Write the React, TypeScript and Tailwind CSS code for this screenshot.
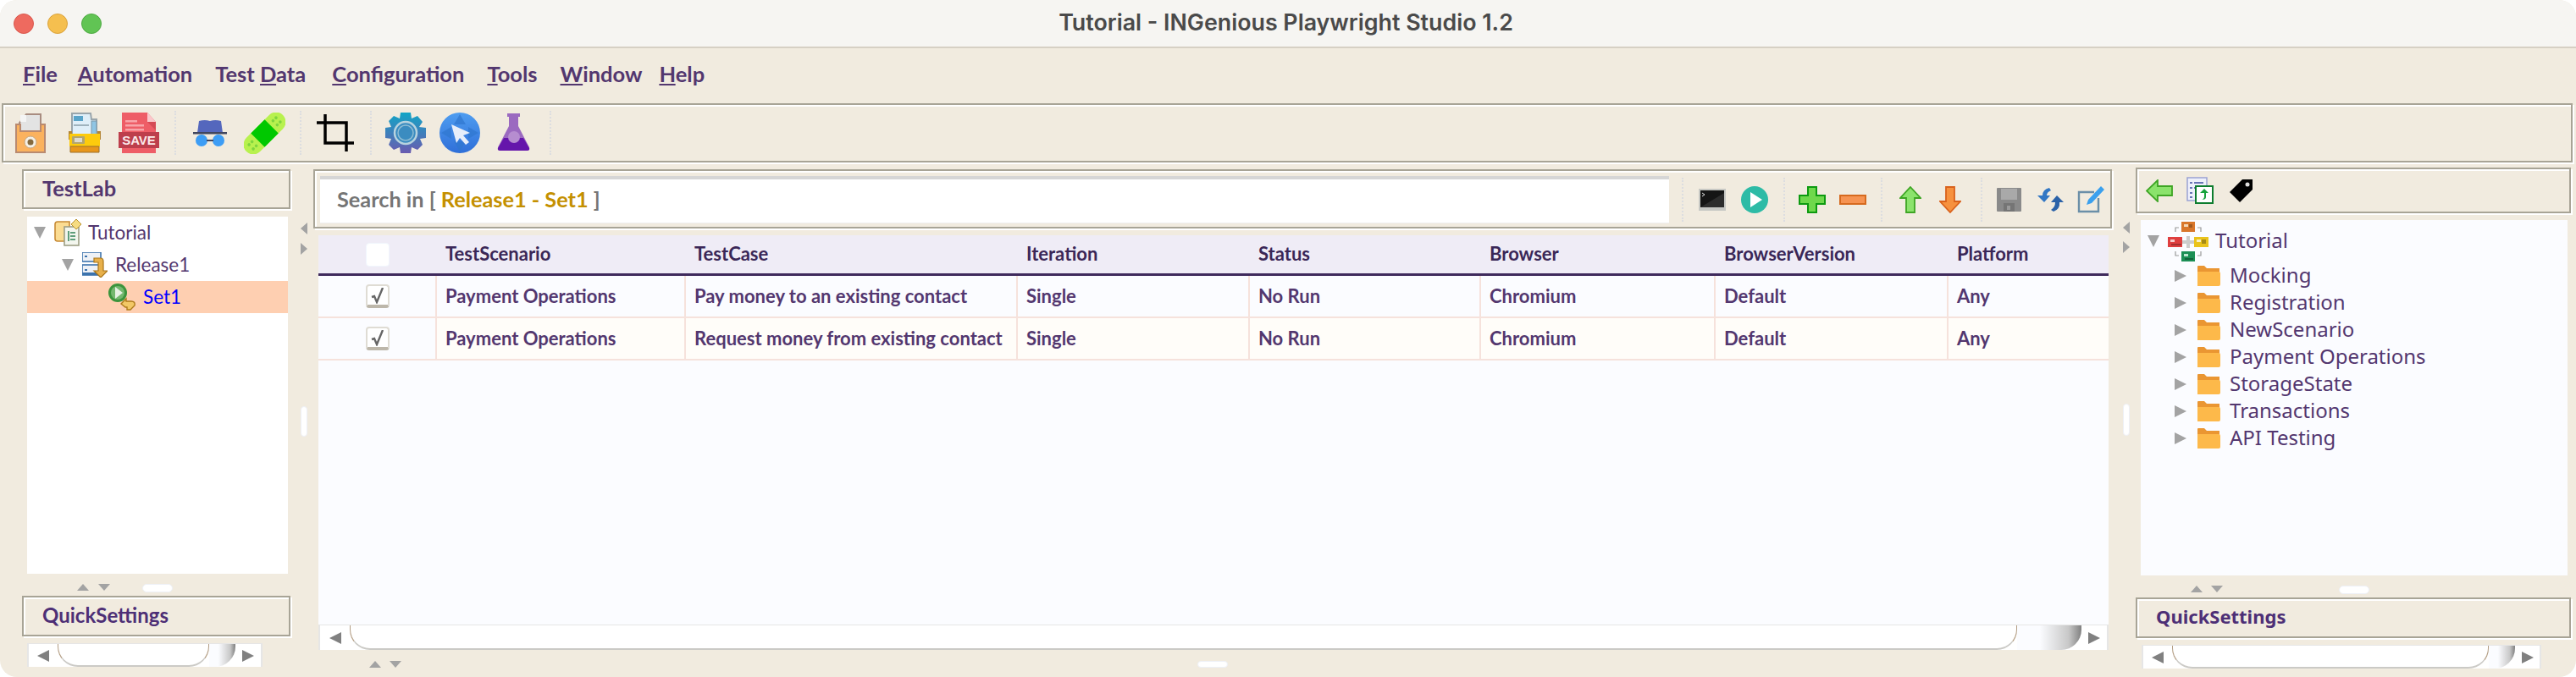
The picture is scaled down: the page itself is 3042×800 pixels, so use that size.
import React from 'react';

const Tri = ({ dir, w = 14, h = 14, color = '#a3a3a3' }: { dir: 'l' | 'r' | 'u' | 'd'; w?: number; h?: number; color?: string }) => {
  const pts = { l: '14,0 14,14 0,7', r: '0,0 14,7 0,14', u: '0,14 14,14 7,0', d: '0,0 14,0 7,14' }[dir];
  return (
    <svg width={w} height={h} viewBox="0 0 14 14" preserveAspectRatio="none" className="shrink-0 block">
      <polygon points={pts} fill={color} />
    </svg>
  );
};

const Sep = ({ cls }: { cls: string }) => (
  <div className={`w-[2px] h-[52px] shrink-0 border-l-2 border-dotted border-[#dcdde0] ${cls}`} />
);

const OpenIcon = () => (
  <svg width="36" height="48" viewBox="0 0 36 48" className="shrink-0">
    <path d="M5 12 L13 2 H30 V26 H5Z" fill="#e3e3e3" stroke="#a88c80" strokeWidth="2" />
    <path d="M6 3 L13 3 V11 H6Z" fill="#f4f4f4" />
    <path d="M1 14 H6 V22 H30 V14 H35 V47 H1Z" fill="#fbb25e" stroke="#b98a70" strokeWidth="2" />
    <circle cx="18" cy="35" r="7" fill="#f5f0e6" stroke="#c7a77f" />
    <circle cx="18" cy="35" r="3.5" fill="#856a3e" />
  </svg>
);
const ArchiveIcon = () => (
  <svg width="40" height="48" viewBox="0 0 40 48" className="shrink-0">
    <path d="M5 1 H27 L28 8 H34 V28 H5Z" fill="#dfeef8" stroke="#9aa5ab" strokeWidth="2" />
    <rect x="7" y="4" width="11" height="6" fill="#5aa4c9" />
    <rect x="7" y="14" width="18" height="2" fill="#9fb2bd" />
    <rect x="28" y="10" width="6" height="18" fill="#8fc5e4" stroke="#7c95a5" />
    <path d="M1 22 H5 V26 H35 V22 H39 V32 H1Z" fill="#b38535" />
    <path d="M2 25 H38 V40 H2Z" fill="#fdcb0c" />
    <path d="M3 40 H37 V47 H3Z" fill="#e8961b" stroke="#9b6f2a" />
    <rect x="5" y="28" width="15" height="9" rx="1" fill="#b3a56d" />
    <rect x="8" y="30" width="9" height="5" fill="#dedbd0" />
  </svg>
);
const SaveIcon = () => (
  <svg width="48" height="48" viewBox="0 0 48 48" className="shrink-0">
    <path d="M4 0 H34 L44 11 V48 H4Z" fill="#ee5d67" />
    <path d="M34 0 L44 11 H34Z" fill="#fbc7cb" />
    <path d="M34 11 H44 V21Z" fill="#d54a55" />
    <rect x="8" y="9" width="14" height="2.5" fill="#f8a5aa" />
    <rect x="8" y="14" width="22" height="2.5" fill="#f8a5aa" />
    <rect x="8" y="19" width="22" height="2.5" fill="#f8a5aa" />
    <rect x="0" y="23" width="48" height="19" fill="#bd3e4c" />
    <text x="24" y="38" textAnchor="middle" fontSize="15" fontWeight="700" fill="#fbe9ea" fontFamily="'Liberation Sans',sans-serif">SAVE</text>
  </svg>
);
const HatIcon = () => (
  <svg width="40" height="32" viewBox="0 0 40 32" className="shrink-0">
    <path d="M7 2 Q14 0 20 2 Q26 0 33 2 L35 16 H5Z" fill="#5467bd" />
    <rect x="0" y="15" width="40" height="2.5" fill="#40465f" />
    <circle cx="10" cy="25" r="7" fill="#3d9df5" />
    <circle cx="30" cy="25" r="7" fill="#3d9df5" />
    <rect x="16" y="24" width="8" height="2" fill="#40465f" />
  </svg>
);
const BandageIcon = () => (
  <svg width="49" height="49" viewBox="0 0 49 49" className="shrink-0">
    <g transform="rotate(-45 24.5 24.5)">
      <rect x="-6" y="13" width="61" height="23" rx="11.5" fill="#b8f14e" />
      <rect x="13" y="13" width="23" height="23" fill="#00c800" />
      <g fill="#7fd53e">
        <circle cx="2" cy="21" r="1.8" /><circle cx="7" cy="21" r="1.8" /><circle cx="2" cy="28" r="1.8" /><circle cx="7" cy="28" r="1.8" />
        <circle cx="42" cy="21" r="1.8" /><circle cx="47" cy="21" r="1.8" /><circle cx="42" cy="28" r="1.8" /><circle cx="47" cy="28" r="1.8" />
      </g>
    </g>
  </svg>
);
const CropIcon = () => (
  <svg width="44" height="44" viewBox="0 0 44 44" className="shrink-0">
    <path d="M0 10 H35 V34 M10 0 V34 H44 M35 34 V44" fill="none" stroke="#000" strokeWidth="3.5" />
  </svg>
);
const GearIcon = () => (
  <svg width="48" height="48" viewBox="0 0 48 48" className="shrink-0">
    <defs>
      <linearGradient id="gearg" x1="0" y1="0" x2="0" y2="1">
        <stop offset="0" stopColor="#12a5c6" />
        <stop offset="1" stopColor="#6a5bb0" />
      </linearGradient>
    </defs>
    <path
      d="M18 0 H30 L31 7 L38 4 L44 11 L40 17 L48 18 V30 L41 31 L44 38 L38 44 L31 41 L30 48 H18 L17 41 L10 44 L4 38 L7 31 L0 30 V18 L7 17 L4 10 L10 4 L17 7Z"
      fill="url(#gearg)"
    />
    <circle cx="24" cy="24" r="13" fill="#3b8cc0" stroke="#b7d3df" strokeWidth="2.5" />
    <circle cx="24" cy="24" r="9" fill="#3b8cc0" stroke="#8dbcd4" strokeWidth="1.5" />
  </svg>
);
const GlobeIcon = () => (
  <svg width="48" height="48" viewBox="0 0 48 48" className="shrink-0">
    <defs>
      <linearGradient id="globeg" x1="0" y1="0" x2="0" y2="1">
        <stop offset="0" stopColor="#4f9df0" />
        <stop offset="1" stopColor="#2f6fd8" />
      </linearGradient>
    </defs>
    <circle cx="24" cy="24" r="24" fill="url(#globeg)" />
    <path d="M24 2 L31 14 H17Z M46 24 L34 31 V17Z M24 46 L17 34 H31Z M2 24 L14 17 V31Z" fill="#2f76cf" opacity="0.7" />
    <path d="M14 14 L36 24 L28 27 L35 35 L31 38 L24 30 L20 36Z" fill="#e7eefa" />
  </svg>
);
const FlaskIcon = () => (
  <svg width="39" height="48" viewBox="0 0 39 48" className="shrink-0">
    <path d="M12 1 H27 V5 H25 V16 L38 41 Q39 45 35 45 H4 Q0 45 1 41 L14 16 V5 H12Z" fill="#9b6ac0" />
    <path d="M8 30 H31 L38 42 Q39 45 35 45 H4 Q0 45 1 42Z" fill="#6516ab" />
    <circle cx="20" cy="29" r="7" fill="#b68dd0" />
  </svg>
);

const TerminalIcon = () => (
  <svg width="32" height="26" viewBox="0 0 32 26" className="shrink-0">
    <rect x="0" y="0" width="32" height="26" fill="#c7c8c4" />
    <rect x="2" y="2" width="28" height="20" fill="#151515" />
    <path d="M2 22 L30 5 V22Z" fill="#2d2d2d" />
    <path d="M4 5 L7 7 L4 9" stroke="#ddd" fill="none" strokeWidth="1" />
  </svg>
);
const PlayIcon = () => (
  <svg width="32" height="32" viewBox="0 0 32 32" className="shrink-0">
    <circle cx="16" cy="16" r="16" fill="#2dbba6" />
    <polygon points="11,7 25,16 11,25" fill="#fff" />
  </svg>
);
const PlusIcon = () => (
  <svg width="32" height="32" viewBox="0 0 32 32" className="shrink-0">
    <path d="M11 1 H21 V11 H31 V21 H21 V31 H11 V21 H1 V11 H11Z" fill="#6fd84c" stroke="#0d9a10" strokeWidth="2" />
  </svg>
);
const MinusIcon = () => (
  <svg width="32" height="12" viewBox="0 0 32 12" className="shrink-0">
    <rect x="1" y="1" width="30" height="10" fill="#f69352" stroke="#d66a1f" strokeWidth="2" />
  </svg>
);
const UpIcon = () => (
  <svg width="26" height="32" viewBox="0 0 26 32" className="shrink-0">
    <path d="M13 1 L25 14 H18 V31 H8 V14 H1Z" fill="#8be36c" stroke="#3ea524" strokeWidth="1.8" />
  </svg>
);
const DownIcon = () => (
  <svg width="26" height="32" viewBox="0 0 26 32" className="shrink-0">
    <path d="M13 31 L25 18 H18 V1 H8 V18 H1Z" fill="#f6913f" stroke="#d9621c" strokeWidth="1.8" />
  </svg>
);
const DiskIcon = () => (
  <svg width="29" height="28" viewBox="0 0 29 28" className="shrink-0">
    <rect width="29" height="28" rx="1" fill="#8a8a8a" />
    <rect x="5" y="1" width="19" height="13" fill="#a9a9a9" />
    <rect x="8" y="18" width="13" height="10" fill="#757575" />
    <rect x="12" y="21" width="4" height="5" fill="#9a9a9a" />
  </svg>
);
const SwapIcon = () => (
  <svg width="31" height="30" viewBox="0 0 31 30" className="shrink-0">
    <path d="M14 1 Q6 3 6 10 H0 L8 18 L15 10 H11 Q11 6 16 4Z" fill="#3277c4" />
    <path d="M19 29 Q27 26 26 18 H31 L23 10 L16 18 H21 Q21 24 16 27Z" fill="#2b62a8" />
  </svg>
);
const EditIcon = () => (
  <svg width="32" height="32" viewBox="0 0 32 32" className="shrink-0">
    <path d="M20 7 H2 V30 H25 V14" fill="none" stroke="#6b8fa8" strokeWidth="2.4" />
    <path d="M28 0 L32 4 L17 20 L11 22 L13 16Z" fill="#3aa0ee" />
  </svg>
);

const BackIcon = () => (
  <svg width="32" height="27" viewBox="0 0 32 27" className="shrink-0">
    <path d="M14 1 L1 13.5 L14 26 V19 H31 V8 H14Z" fill="#8be36c" stroke="#3ea524" strokeWidth="1.8" />
  </svg>
);
const DocSyncIcon = () => (
  <svg width="32" height="32" viewBox="0 0 32 32" className="shrink-0">
    <rect x="1" y="1" width="23" height="27" fill="#eef0fb" stroke="#9aa3d4" strokeWidth="1.5" />
    <g fill="#6a76b5">
      <rect x="4" y="6" width="3" height="2" /><rect x="9" y="6" width="11" height="2" />
      <rect x="4" y="12" width="3" height="2" /><rect x="9" y="12" width="7" height="2" />
      <rect x="4" y="18" width="3" height="2" /><rect x="4" y="23" width="3" height="2" />
    </g>
    <rect x="11" y="11" width="20" height="20" fill="#fff" stroke="#0e7d2f" strokeWidth="2" />
    <path d="M21 14 L26 19 H23 V24 Q23 27 18 27 Q21 26 21 23 V19 H16Z" fill="#17a23c" />
  </svg>
);
const TagIcon = () => (
  <svg width="29" height="28" viewBox="0 0 29 28" className="shrink-0">
    <path d="M16 1 H28 V13 L13 28 L1 16Z" fill="#000" />
    <circle cx="22" cy="7" r="2.5" fill="#ddd" />
  </svg>
);

const ProjectIcon = () => (
  <svg width="32" height="32" viewBox="0 0 32 32" className="shrink-0">
    <path d="M1 6 Q1 3 4 3 H18 V26 H4 Q1 26 1 23Z" fill="#fbdc92" stroke="#c78a35" strokeWidth="1.6" />
    <rect x="12" y="9" width="17" height="22" fill="#f3f6ee" stroke="#9d9f84" strokeWidth="1.6" />
    <g fill="#5f9e7a">
      <rect x="16" y="14" width="2" height="12" /><rect x="19" y="15" width="6" height="2" />
      <rect x="19" y="19" width="6" height="2" /><rect x="19" y="23" width="6" height="2" />
    </g>
    <path d="M26 0 L32 6 L26 12 L20 6Z" fill="#f6dc82" stroke="#b9912c" />
  </svg>
);
const ReleaseIcon = () => (
  <svg width="30" height="30" viewBox="0 0 30 30" className="shrink-0">
    <rect x="0" y="0" width="22" height="11" fill="#eef1f6" stroke="#3c73ad" strokeWidth="1.6" />
    <rect x="0" y="15" width="22" height="12" fill="#eef1f6" stroke="#3c73ad" strokeWidth="1.6" />
    <rect x="3" y="4" width="3" height="2" fill="#3c73ad" /><rect x="3" y="20" width="3" height="2" fill="#3c73ad" />
    <rect x="0" y="24" width="22" height="3" fill="#3c73ad" />
    <path d="M14 7 H22 Q25 7 25 11 V22 H30 L22 30 L14 22 H19 V12 H14Z" fill="#e7b04b" stroke="#a9761a" strokeWidth="1.2" />
  </svg>
);
const SetIcon = () => (
  <svg width="32" height="32" viewBox="0 0 32 32" className="shrink-0">
    <circle cx="11" cy="11" r="11" fill="#3b943c" />
    <circle cx="11" cy="11" r="8" fill="#74b86f" />
    <polygon points="8,4 17,11 8,18" fill="#e7f1e5" />
    <path d="M15 24 L21 18 V21 H27 Q32 21 31 26 L26 31 H22 V28 H20Z" fill="#f2c867" stroke="#ae7b1b" strokeWidth="1.4" />
  </svg>
);
const RootIcon = () => (
  <svg width="48" height="47" viewBox="0 0 48 47" className="shrink-0">
    <path d="M9 12 V7 H13 M35 7 H39 V12 M9 35 V40 H13 M39 35 V40 H35" fill="none" stroke="#999" strokeWidth="1.2" />
    <rect x="22" y="17" width="4" height="14" fill="#ccc" />
    <rect x="17" y="22" width="14" height="4" fill="#ccc" />
    <rect x="16" y="0" width="16" height="12" fill="#d9772c" /><rect x="19" y="3" width="5" height="3" fill="#f3d8b8" /><rect x="25" y="3" width="4" height="4" fill="#a15a21" />
    <rect x="0" y="18" width="17" height="12" fill="#df3f3f" /><rect x="3" y="21" width="5" height="3" fill="#f6cccc" /><rect x="4" y="26" width="12" height="2" fill="#a62f2f" />
    <rect x="31" y="18" width="17" height="12" fill="#eac31b" /><rect x="34" y="21" width="5" height="3" fill="#fbf0bf" /><rect x="40" y="21" width="5" height="5" fill="#a58a16" />
    <rect x="16" y="35" width="16" height="12" fill="#1c8f55" /><rect x="19" y="38" width="5" height="3" fill="#bfe5d0" /><rect x="20" y="43" width="10" height="2" fill="#12633b" />
  </svg>
);
const FolderIcon = () => (
  <svg width="28" height="24" viewBox="0 0 28 24" className="shrink-0">
    <path d="M1 1 Q1 0 2 0 H9 L12 3 H27 V8 H1Z" fill="#ea9632" />
    <path d="M1 7 H26 Q28 7 28 9 V22 Q28 24 26 24 H1Z" fill="#fdb94a" />
  </svg>
);

const Scroller = ({ wrap, thumb, tail, leftW }: { wrap: string; thumb: string; tail: string; leftW: string }) => (
  <div className={`flex shrink-0 bg-white border-l-2 border-r-2 border-t border-[#e6e6e6] ${wrap}`}>
    <div className={`flex items-center justify-center shrink-0 ${leftW}`}><Tri dir="l" color="#808080" /></div>
    <div className={`${thumb} shrink-0 border-l border-r border-b-2 border-l-[#b39d83] border-r-[#b39d83] border-b-[#cbcac6] rounded-b-[24px] bg-white`} />
    <div className={`${tail} shrink-0 rounded-br-[24px] bg-[linear-gradient(to_right,#fbfcff_35%,#c8c8c8_80%,#808080)]`} />
    <div className="flex items-center justify-center flex-1"><Tri dir="r" color="#808080" /></div>
  </div>
);

const Handle = ({ cls }: { cls: string }) => <div className={`bg-white border border-[#eef0f6] rounded-[5px] shrink-0 ${cls}`} />;

const menu = [
  ['', 'F', 'ile', 'ml-[27px]'],
  ['', 'A', 'utomation', 'ml-[24px]'],
  ['Test ', 'D', 'ata', 'ml-[27px]'],
  ['', 'C', 'onfiguration', 'ml-[31px]'],
  ['', 'T', 'ools', 'ml-[27px]'],
  ['', 'W', 'indow', 'ml-[27px]'],
  ['', 'H', 'elp', 'ml-[20px]'],
];

const colW = ['w-[138px]', 'w-[294px]', 'w-[392px]', 'w-[274px]', 'w-[273px]', 'w-[277px]', 'w-[275px]', 'w-[191px]'];
const heads = ['TestScenario', 'TestCase', 'Iteration', 'Status', 'Browser', 'BrowserVersion', 'Platform'];
const rows = [
  ['Payment Operations', 'Pay money to an existing contact', 'Single', 'No Run', 'Chromium', 'Default', 'Any'],
  ['Payment Operations', 'Request money from existing contact', 'Single', 'No Run', 'Chromium', 'Default', 'Any'],
];
const folders = ['Mocking', 'Registration', 'NewScenario', 'Payment Operations', 'StorageState', 'Transactions', 'API Testing'];

const etched = 'border-2 border-[#a8a496] shadow-[inset_2px_2px_0_#fff,2px_2px_0_#fff]';

export default function App() {
  return (
    <div className="w-[3042px] h-[800px] bg-white overflow-hidden font-['Lato',sans-serif]">
      <div className="w-full h-full flex flex-col bg-[#f1ebdf] rounded-[20px] overflow-hidden">
        {/* title bar */}
        <div className="h-[57px] shrink-0 bg-[#f6f5f2] border-b-2 border-[#d6d0c4] flex items-center relative">
          <div className="flex gap-[16px] ml-[16px]">
            <div className="w-[24px] h-[24px] rounded-full bg-[#ee6a5f] border border-[#d9574d]" />
            <div className="w-[24px] h-[24px] rounded-full bg-[#f5bf4f] border border-[#d9a23c]" />
            <div className="w-[24px] h-[24px] rounded-full bg-[#61c454] border border-[#4fa944]" />
          </div>
          <div className="absolute inset-0 flex items-center justify-center pr-[5px] pb-[2px] text-[26.8px] font-semibold text-[#4a4a4a] font-['Inter',sans-serif]">
            Tutorial - INGenious Playwright Studio 1.2
          </div>
        </div>
        {/* menu */}
        <div className="h-[63px] shrink-0 flex items-center pb-[2px] text-[25.5px] font-bold text-[#53376f]">
          {menu.map((m) => (
            <span key={m[1] + m[2]} className={m[3]}>
              {m[0]}<u>{m[1]}</u>{m[2]}
            </span>
          ))}
        </div>
        {/* main toolbar */}
        <div className="h-[70px] mx-[2px] shrink-0 mt-[2px] w-[3036px] flex items-center border-2 border-[#a8a496] shadow-[inset_2px_2px_0_#fff,2px_2px_0_#fff] pl-[14px]">
          <OpenIcon />
          <div className="ml-[26px]"><ArchiveIcon /></div>
          <div className="ml-[20px]"><SaveIcon /></div>
          <Sep cls="ml-[18px]" />
          <div className="ml-[20px]"><HatIcon /></div>
          <div className="ml-[20px]"><BandageIcon /></div>
          <Sep cls="ml-[17px]" />
          <div className="ml-[18px]"><CropIcon /></div>
          <Sep cls="ml-[19px]" />
          <div className="ml-[16px]"><GearIcon /></div>
          <div className="ml-[16px]"><GlobeIcon /></div>
          <div className="ml-[20px]"><FlaskIcon /></div>
          <Sep cls="ml-[23px]" />
        </div>
        {/* body */}
        <div className="flex flex-1 min-h-0 mt-[6px] pl-[26px]">
          {/* left column */}
          <div className="w-[319px] shrink-0 flex flex-col">
            <div className={`w-[317px] h-[47px] mt-[2px] shrink-0 flex items-center pl-[22px] pb-[2px] text-[25.5px] font-bold text-[#53376f] ${etched}`}>TestLab</div>
            <div className="w-[308px] h-[422px] ml-[6px] mt-[9px] shrink-0 bg-white text-[#53376f] text-[22.5px]">
              <div className="h-[38px] flex items-center pl-[8px]">
                <Tri dir="d" />
                <div className="ml-[10px]"><ProjectIcon /></div>
                <span className="ml-[8px]">Tutorial</span>
              </div>
              <div className="h-[38px] flex items-center pl-[41px]">
                <Tri dir="d" />
                <div className="ml-[10px]"><ReleaseIcon /></div>
                <span className="ml-[9px]">Release1</span>
              </div>
              <div className="h-[38px] flex items-center pl-[96px] bg-[#fecfb1] text-[#0000ff]">
                <SetIcon />
                <span className="ml-[9px]">Set1</span>
              </div>
            </div>
            <div className="h-[26px] shrink-0 flex items-start pl-[65px] pt-[12px]">
              <Tri dir="u" h={8} />
              <div className="ml-[11px]"><Tri dir="d" h={8} /></div>
              <Handle cls="w-[36px] h-[10px] ml-[38px]" />
            </div>
            <div className={`w-[317px] h-[48px] shrink-0 flex items-center pl-[22px] pb-[2px] text-[24px] font-bold text-[#4d2f76] ${etched}`}>QuickSettings</div>
            <Scroller wrap="w-[278px] h-[28px] ml-[6px] mt-[8px]" leftW="w-[34px]" thumb="w-[179px]" tail="w-[31px]" />
          </div>
          {/* left splitter */}
          <div className="w-[25px] shrink-0 flex flex-col pl-[10px]">
            <div className="mt-[65px]"><Tri dir="l" w={8} /></div>
            <div className="mt-[10px]"><Tri dir="r" w={8} /></div>
            <Handle cls="w-[8px] h-[36px] mt-[179px]" />
          </div>
          {/* middle column */}
          <div className="w-[2124px] shrink-0 flex flex-col">
            <div className={`w-[2124px] h-[70px] mt-[2px] shrink-0 flex items-center pl-[6px] pt-[2px] ${etched}`}>
              <div className="w-[1593px] h-[56px] shrink-0 bg-white border-t-4 border-[#d6d6d6] border-b border-b-[#eeeeee] flex items-center pl-[20px] pb-[3px] text-[25.3px] font-bold text-[#757575]">
                Search in [&nbsp;<span className="text-[#c49000]">Release1 - Set1</span>&nbsp;]
              </div>
              <Sep cls="ml-[15px]" />
              <div className="ml-[18px]"><TerminalIcon /></div>
              <div className="ml-[18px]"><PlayIcon /></div>
              <Sep cls="ml-[18px]" />
              <div className="ml-[16px]"><PlusIcon /></div>
              <div className="ml-[16px]"><MinusIcon /></div>
              <Sep cls="ml-[17px]" />
              <div className="ml-[20px]"><UpIcon /></div>
              <div className="ml-[21px]"><DownIcon /></div>
              <Sep cls="ml-[23px]" />
              <div className="ml-[17px]"><DiskIcon /></div>
              <div className="ml-[19px]"><SwapIcon /></div>
              <div className="ml-[16px]"><EditIcon /></div>
            </div>
            <div className="w-[2114px] h-[460px] ml-[6px] mt-[8px] shrink-0 bg-[#fbfcff] text-[22px]">
              <div className="h-[48px] flex bg-[#efecf6] border-b-[3px] border-[#3f2a5c] font-bold text-[#3a2757]">
                <div className={`${colW[0]} shrink-0 flex items-center pl-[56px]`}>
                  <div className="w-[28px] h-[28px] bg-white rounded-[4px] border border-[#f1f6fd]" />
                </div>
                {heads.map((h, i) => (
                  <div key={h} className={`${colW[i + 1]} shrink-0 flex items-center pl-[12px] pb-[2px] whitespace-nowrap`}>{h}</div>
                ))}
              </div>
              {rows.map((r, ri) => (
                <div key={ri} className={`h-[50px] flex border-b-2 border-[#f6e2dc] font-bold text-[#53376f] ${ri === 1 ? 'bg-[#fffdf9]' : 'bg-[#fbfcff]'}`}>
                  <div className={`${colW[0]} shrink-0 flex items-center pl-[56px] ${ri === 1 ? 'bg-[#fbfcff]' : ''}`}>
                    <div className="w-[28px] h-[28px] bg-white rounded-[4px] border-2 border-[#dfdcd4] border-b-[4px] border-b-[#bdb7aa] flex items-center justify-center">
                      <svg width="16" height="19" viewBox="0 0 16 19">
                        <path d="M1 11 L4 10 L7 17 L14 0" fill="none" stroke="#666" strokeWidth="2.4" />
                      </svg>
                    </div>
                  </div>
                  {r.map((c, i) => (
                    <div key={i} className={`${colW[i + 1]} shrink-0 flex items-center pl-[10px] pb-[2px] border-l-2 border-[#f6e2dc] whitespace-nowrap`}>{c}</div>
                  ))}
                </div>
              ))}
            </div>
            <Scroller wrap="w-[2114px] h-[30px] ml-[6px]" leftW="w-[35px]" thumb="w-[1969px]" tail="w-[76px]" />
            <div className="flex items-center pl-[66px] mt-[13px]">
              <Tri dir="u" h={8} />
              <div className="ml-[10px]"><Tri dir="d" h={8} /></div>
              <Handle cls="w-[36px] h-[8px] ml-[940px]" />
            </div>
          </div>
          {/* right splitter */}
          <div className="w-[28px] shrink-0 flex flex-col pl-[13px]">
            <div className="mt-[64px]"><Tri dir="l" w={8} /></div>
            <div className="mt-[9px]"><Tri dir="r" w={8} /></div>
            <Handle cls="w-[8px] h-[38px] mt-[178px]" />
          </div>
          {/* right column */}
          <div className="w-[514px] shrink-0 flex flex-col">
            <div className={`w-[514px] h-[54px] shrink-0 flex items-center pl-[10px] ${etched}`}>
              <BackIcon />
              <div className="ml-[16px]"><DocSyncIcon /></div>
              <div className="ml-[18px]"><TagIcon /></div>
            </div>
            <div className="w-[504px] h-[420px] ml-[6px] mt-[8px] shrink-0 bg-[#fbfcff] text-[#53376f] text-[24px] font-['Noto_Sans',sans-serif]">
              <div className="h-[50px] flex items-center pl-[8px]">
                <Tri dir="d" />
                <div className="ml-[10px]"><RootIcon /></div>
                <span className="ml-[8px] pb-[2px]">Tutorial</span>
              </div>
              {folders.map((f) => (
                <div key={f} className="h-[32px] flex items-center pl-[40px]">
                  <Tri dir="r" />
                  <div className="ml-[12px]"><FolderIcon /></div>
                  <span className="ml-[11px] pb-[2px]">{f}</span>
                </div>
              ))}
            </div>
            <div className="h-[26px] shrink-0 flex items-start pl-[65px] pt-[12px]">
              <Tri dir="u" h={8} />
              <div className="ml-[10px]"><Tri dir="d" h={8} /></div>
              <Handle cls="w-[36px] h-[10px] ml-[137px]" />
            </div>
            <div className={`w-[514px] h-[48px] shrink-0 flex items-center pl-[22px] pb-[4px] text-[22px] font-bold text-[#4d2f76] font-['Noto_Sans',sans-serif] ${etched}`}>QuickSettings</div>
            <Scroller wrap="w-[472px] h-[28px] ml-[7px] mt-[8px]" leftW="w-[34px]" thumb="w-[374px]" tail="w-[31px]" />
          </div>
        </div>
      </div>
    </div>
  );
}
